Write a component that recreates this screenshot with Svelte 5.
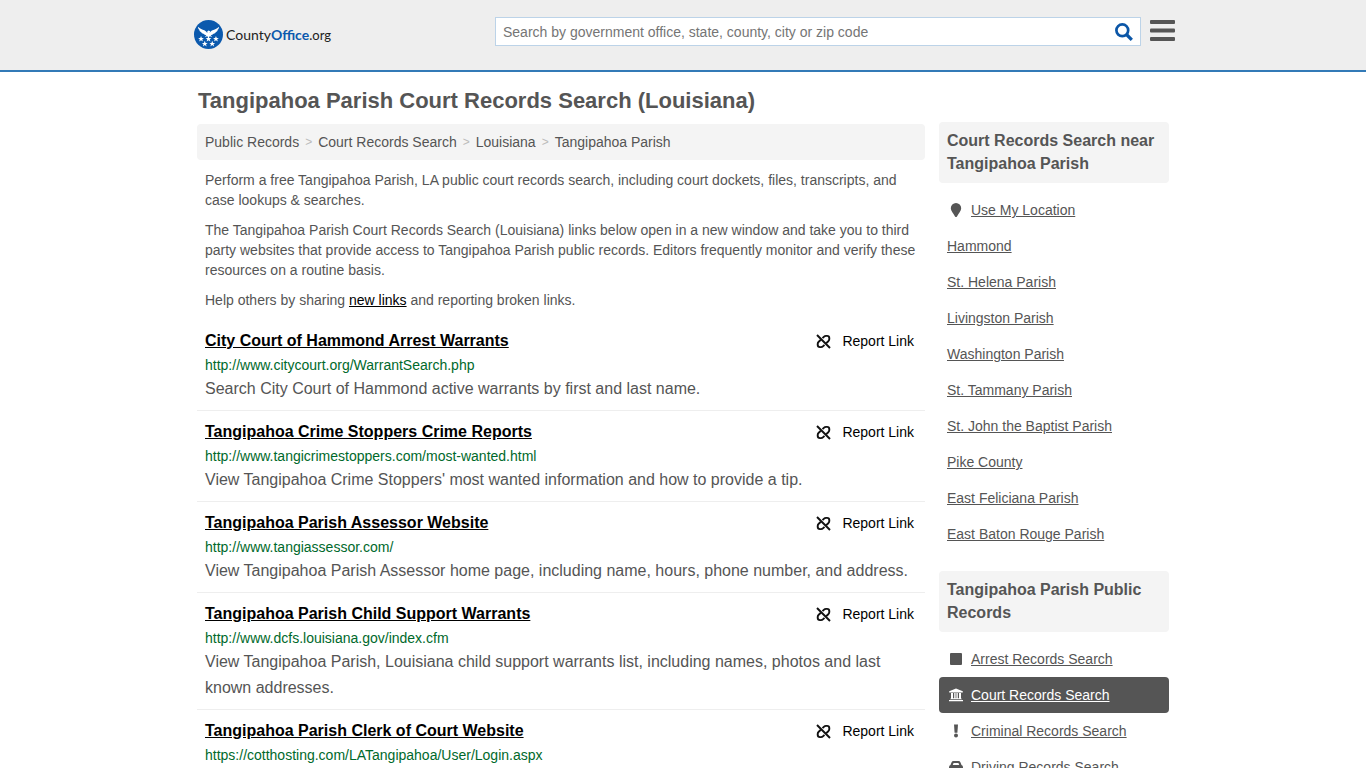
<script>
  const crumbs = ['Public Records', 'Court Records Search', 'Louisiana', 'Tangipahoa Parish'];

  const records = [
    {
      title: 'City Court of Hammond Arrest Warrants',
      url: 'http://www.citycourt.org/WarrantSearch.php',
      text: 'Search City Court of Hammond active warrants by first and last name.'
    },
    {
      title: 'Tangipahoa Crime Stoppers Crime Reports',
      url: 'http://www.tangicrimestoppers.com/most-wanted.html',
      text: "View Tangipahoa Crime Stoppers' most wanted information and how to provide a tip."
    },
    {
      title: 'Tangipahoa Parish Assessor Website',
      url: 'http://www.tangiassessor.com/',
      text: 'View Tangipahoa Parish Assessor home page, including name, hours, phone number, and address.'
    },
    {
      title: 'Tangipahoa Parish Child Support Warrants',
      url: 'http://www.dcfs.louisiana.gov/index.cfm',
      text: 'View Tangipahoa Parish, Louisiana child support warrants list, including names, photos and last known addresses.'
    },
    {
      title: 'Tangipahoa Parish Clerk of Court Website',
      url: 'https://cotthosting.com/LATangipahoa/User/Login.aspx',
      text: ''
    }
  ];

  const nearby = [
    'Hammond',
    'St. Helena Parish',
    'Livingston Parish',
    'Washington Parish',
    'St. Tammany Parish',
    'St. John the Baptist Parish',
    'Pike County',
    'East Feliciana Parish',
    'East Baton Rouge Parish'
  ];

  const categories = [
    { name: 'Arrest Records Search', icon: 'square' },
    { name: 'Court Records Search', icon: 'court', active: true },
    { name: 'Criminal Records Search', icon: 'mark' },
    { name: 'Driving Records Search', icon: 'car' }
  ];

  const stars = [
    [6.8, 18.3], [14, 18.3], [21.2, 18.3], [10.4, 23], [17.6, 23]
  ];

  let query = '';
</script>

<header>
  <div class="bar">
    <a href="/" class="logo" aria-label="CountyOffice.org">
      <svg viewBox="0 0 28 28" width="29" height="29">
        <circle cx="14" cy="14" r="14" fill="#0b59ad" />
        <path
          fill="#fff"
          d="M3.800 6.500c2 2.200 4.200 2.400 6.200 3.500 1.300.7 2.200 1.500 2.800 2.600l.1-1.700 1.200-.8 1.500.8-.6 1.700c.6-1.100 1.500-1.900 2.900-2.600 2-1.100 4.300-1.300 6.300-3.500-.1 1.600-.7 2.500-1.500 3l.2.1c-.3 1.200-1 1.800-1.800 2-.3 1-1.200 1.600-2.200 1.700-.8.900-1.700 1.200-2.800 1.200l1.400 1.800-2.200-.5-1.300 1-1.300-1-2.200.5 1.400-1.800c-1.100 0-2-.3-2.800-1.200-1-.1-1.900-.7-2.200-1.700-.8-.2-1.500-.8-1.800-2l.2-.1C4.500 9 3.900 8.100 3.800 6.500z"
        />
        {#each stars as [x, y]}
          <path
            fill="#fff"
            transform="translate({x} {y})"
            d="M0-2.900.8-.9 2.800-.9 1.200.4 1.800 2.500 0 1.200-1.800 2.500-1.200.4-2.800-.9-.8-.9z"
          />
        {/each}
      </svg>
      <span class="brand">County<b>Office</b><span class="tld">.org</span></span>
    </a>
    <form class="search" on:submit|preventDefault>
      <input
        type="text"
        aria-label="Search"
        placeholder="Search by government office, state, county, city or zip code"
        bind:value={query}
      />
      <button class="go" aria-label="Submit search">
        <svg viewBox="0 0 18 18" width="18" height="18" fill="none" stroke="#0b56a7">
          <circle cx="7.300" cy="7.300" r="5.900" stroke-width="2.700" />
          <path d="M11.500 11.500l5.300 5.300" stroke-width="3.200" />
        </svg>
      </button>
    </form>
    <button class="menu" aria-label="Menu">
      <svg viewBox="0 0 25 22" width="25" height="22" fill="#555">
        <rect width="25" height="4" rx="1" />
        <rect y="8.500" width="25" height="4" rx="1" />
        <rect y="17" width="25" height="4" rx="1" />
      </svg>
    </button>
  </div>
</header>

<div class="container">
  <h1>Tangipahoa Parish Court Records Search (Louisiana)</h1>
  <div class="columns">
    <main>
      <nav class="crumbs" aria-label="Breadcrumb">
        {#each crumbs as crumb, i}
          {#if i > 0}<span class="sep">&gt;</span>{/if}
          <a href="#{i}">{crumb}</a>
        {/each}
      </nav>

      <div class="intro">
        <p>Perform a free Tangipahoa Parish, LA public court records search, including court dockets, files, transcripts, and case lookups &amp; searches.</p>
        <p>The Tangipahoa Parish Court Records Search (Louisiana) links below open in a new window and take you to third party websites that provide access to Tangipahoa Parish public records. Editors frequently monitor and verify these resources on a routine basis.</p>
        <p>Help others by sharing <a href="#new">new links</a> and reporting broken links.</p>
      </div>

      <ul class="records">
        {#each records as record}
          <li>
            <div class="record-head">
              <a class="title" href={record.url}>{record.title}</a>
              <button class="report">
                <svg viewBox="0 0 15 15" width="15" height="15" fill="none" stroke="#111" stroke-width="1.900">
                  <path d="M1 1l13 13" />
                  <path d="M6.500 4.200l1.300-1.300q1-1 2.300-1h.9q2.300 0 2.300 2.300v.9q0 1.300-1 2.200l-2.200 2" />
                  <path d="M8.500 10.800l-1.300 1.300q-1 1-2.300 1H4q-2.300 0-2.300-2.300v-.9q0-1.300 1-2.200l2.200-2" />
                </svg>
                Report Link
              </button>
            </div>
            <div class="url">{record.url}</div>
            {#if record.text}<p class="text">{record.text}</p>{/if}
          </li>
        {/each}
      </ul>
    </main>

    <aside>
      <section>
        <h2>Court Records Search near Tangipahoa Parish</h2>
        <ul class="links">
          <li>
            <a href="#location">
              <svg viewBox="0 0 18 16" width="18" height="16" fill="currentColor">
                <path d="M9 1a5.200 5.200 0 0 1 5.200 5.200c0 2.600-2.700 5.300-4.200 8.200q-1 1.400-2 0C6.500 11.500 3.800 8.800 3.800 6.200A5.200 5.200 0 0 1 9 1z" />
              </svg>
              <span>Use My Location</span>
            </a>
          </li>
          {#each nearby as place}
            <li><a href="#near"><span>{place}</span></a></li>
          {/each}
        </ul>
      </section>

      <section>
        <h2>Tangipahoa Parish Public Records</h2>
        <ul class="links">
          {#each categories as cat}
            <li class:active={cat.active}>
              <a href="#records">
                <svg viewBox="0 0 18 16" width="18" height="16" fill="currentColor">
                  {#if cat.icon === 'square'}
                    <rect x="3" y="2" width="12" height="12" rx="1" />
                  {:else if cat.icon === 'court'}
                    <path d="M9 1.500l6.800 2.700v1.200H2.200V4.200zM4 6h2v5.200h1.200V6h1.400v5.200h.8V6h1.400v5.200H12V6h2v5.200l1 1.100H3l1-1.100zM2 12.900h14v1.400H2z" />
                  {:else if cat.icon === 'mark'}
                    <path d="M7 1.500h4l-.6 8.200H7.600z" />
                    <circle cx="9" cy="12.500" r="2" />
                  {:else}
                    <path fill-rule="evenodd" d="M6.500 2h5q1.400 0 1.900 1.300l1.100 2.700q1.500.5 1.500 2.200v3.300h-1.200V13q0 1.200-1.200 1.200T12.400 13v-1.500H5.600V13q0 1.200-1.200 1.200T3.200 13v-1.500H2V8.200Q2 6.500 3.500 6l1.100-2.700Q5.100 2 6.500 2zM6.600 4l-.9 2h6.600l-.9-2z" />
                  {/if}
                </svg>
                <span>{cat.name}</span>
              </a>
            </li>
          {/each}
        </ul>
      </section>
    </aside>
  </div>
</div>

<style>
  :global(body) {
    background: #fff;
    color: #555;
    font-family: "Liberation Sans", Arial, sans-serif;
    font-size: 14px;
    line-height: 20px;
  }

  .container {
    max-width: 972px;
    margin: 0 auto;
  }

  ul {
    list-style: none;
    margin: 0;
    padding: 0;
  }

  button {
    border: none;
    background: none;
    padding: 0;
    font: inherit;
    cursor: pointer;
  }

  svg {
    display: block;
    flex: none;
  }

  header {
    background: #eee;
    border-bottom: 2px solid #337ab7;
  }

  .bar {
    display: flex;
    align-items: center;
    max-width: 984px;
    height: 62px;
    margin: 0 auto;
    padding-bottom: 8px;
  }

  .logo {
    display: flex;
    align-items: center;
    gap: 3px;
    padding: 7px 0 0 3px;
    width: 301px;
    color: #222;
    text-decoration: none;
  }

  .brand {
    font-family: Lato, sans-serif;
    font-size: 14px;
  }

  .brand b {
    color: #0b59ad;
  }

  .tld {
    font-size: 13px;
  }

  .search {
    flex: 1;
    display: flex;
    height: 27px;
    border: 1px solid #bcd3e8;
    background: #fff;
  }

  .search input {
    flex: 1;
    min-width: 0;
    border: none;
    outline: none;
    padding: 1px 7px 0;
    background: none;
    font: inherit;
    color: #555;
  }

  .search input::placeholder {
    color: #757575;
  }

  .go {
    padding: 2px 7px 0;
  }

  .menu {
    margin: 0 0 0 9px;
  }

  h1 {
    margin: 0;
    padding: 16px 0 10px 1px;
    font-size: 22px;
    line-height: 26px;
  }

  .columns {
    display: flex;
    align-items: flex-start;
    gap: 14px;
  }

  main {
    flex: 1;
    min-width: 0;
  }

  .crumbs {
    display: flex;
    gap: 6px;
    padding: 8px;
    background: #f4f4f4;
    border-radius: 4px;
  }

  .crumbs a {
    color: #555;
    text-decoration: none;
  }

  .sep {
    color: #bbb;
    font-size: 12px;
  }

  .intro {
    padding: 0 8px;
  }

  .intro p {
    margin: 10px 0;
  }

  .intro a {
    color: #000;
  }

  .records li {
    padding: 8px;
    border-bottom: 1px solid #eee;
  }

  .record-head {
    display: flex;
    justify-content: space-between;
    align-items: center;
    line-height: 26px;
  }

  .title {
    color: #000;
    font-size: 16px;
    font-weight: bold;
  }

  .report {
    display: flex;
    align-items: center;
    gap: 11px;
    padding-right: 3px;
    color: #000;
  }

  .url {
    color: #00692b;
    line-height: 22px;
  }

  .text {
    margin: 0;
    font-size: 16px;
    line-height: 26px;
  }

  aside {
    width: 230px;
    margin-top: -2px;
  }

  section {
    margin-bottom: 19px;
  }

  h2 {
    margin: 0 0 9px;
    padding: 7px 8px 8px;
    background: #f4f4f4;
    border-radius: 4px;
    font-size: 16px;
    line-height: 23px;
  }

  .links a {
    display: flex;
    align-items: center;
    gap: 6px;
    padding: 8px;
    color: #555;
    text-decoration: none;
  }

  .links span {
    text-decoration: underline;
  }

  .links .active a {
    background: #555;
    border-radius: 4px;
    color: #fff;
  }
</style>
